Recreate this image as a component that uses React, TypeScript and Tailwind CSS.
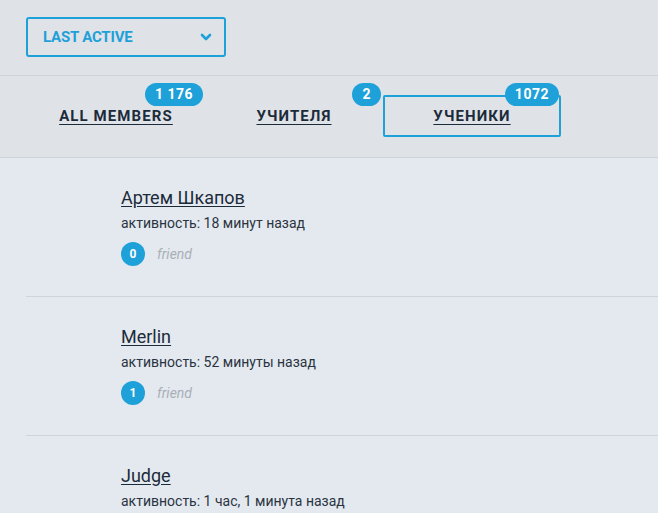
import React from "react";

const tabs = [
  { label: "ALL MEMBERS", count: "1 176", active: false },
  { label: "УЧИТЕЛЯ", count: "2", active: false },
  { label: "УЧЕНИКИ", count: "1072", active: true },
];

const members = [
  { name: "Артем Шкапов", activity: "активность: 18 минут назад", friends: "0" },
  { name: "Merlin", activity: "активность: 52 минуты назад", friends: "1" },
  { name: "Judge", activity: "активность: 1 час, 1 минута назад", friends: "0" },
];

export default function App() {
  return (
    <div
      className="w-[658px] h-[513px] overflow-hidden bg-[#e4e9f0]"
      style={{ fontFamily: "Roboto, 'Liberation Sans', sans-serif" }}
    >
      <div className="bg-[#dfe3e8] h-[75px] pt-[17px] pl-[26px]">
        <div className="w-[200px] h-[40px] border-2 border-[#1ea0d8] rounded-[3px] flex items-center justify-between pl-[15px] pr-[12px]">
          <span className="text-[15px] font-bold text-[#1ea0d8] tracking-[-0.2px]">LAST ACTIVE</span>
          <svg width="12" height="8" viewBox="0 0 12 8">
            <path d="M2 2 L6 6 L10 2" fill="none" stroke="#1ea0d8" strokeWidth="2.6" strokeLinecap="round" strokeLinejoin="round" />
          </svg>
        </div>
      </div>
      <div className="h-[1px] bg-[#cfd4db]" />
      <div className="bg-[#dfe3e8] h-[81px] pt-[19px] pl-[27px] flex">
        {tabs.map((t) => (
          <div
            key={t.label}
            className={
              "relative w-[178px] h-[42px] flex items-center justify-center " +
              (t.active ? "border-2 border-[#1ea0d8] rounded-[2px]" : "")
            }
          >
            <span className="text-[15px] font-bold tracking-[1.1px] text-[#1c2b3a] underline underline-offset-[3px]">
              {t.label}
            </span>
            <span
              className={
                "absolute h-[23px] min-w-[25px] px-[10px] rounded-full bg-[#1ea0d8] text-white text-[14px] font-bold flex items-center justify-center tracking-[0.5px] " +
                (t.active ? "right-[0px] top-[-14px]" : "right-[2px] top-[-12px]")
              }
            >
              {t.count}
            </span>
          </div>
        ))}
      </div>
      <div className="h-[1px] bg-[#cfd4db]" />
      <div className="pl-[26px]">
        {members.map((m, i) => (
          <div key={m.name}>
            {i > 0 && <div className="h-[1px] bg-[#cfd4db]" />}
            <div className="pl-[95px] pt-[28px] h-[138px]">
              <div className="text-[18px] leading-[24px] text-[#1c2b3a] underline underline-offset-[2px]">{m.name}</div>
              <div className="text-[14px] leading-[20px] text-[#2a3440] mt-[3px]">{m.activity}</div>
              <div className="flex items-center mt-[9px]">
                <span className="w-[24px] h-[24px] rounded-full bg-[#1ea0d8] text-white text-[12px] font-bold flex items-center justify-center">
                  {m.friends}
                </span>
                <span className="ml-[12px] text-[14px] italic text-[#a9afb7]">friend</span>
              </div>
            </div>
          </div>
        ))}
      </div>
    </div>
  );
}
